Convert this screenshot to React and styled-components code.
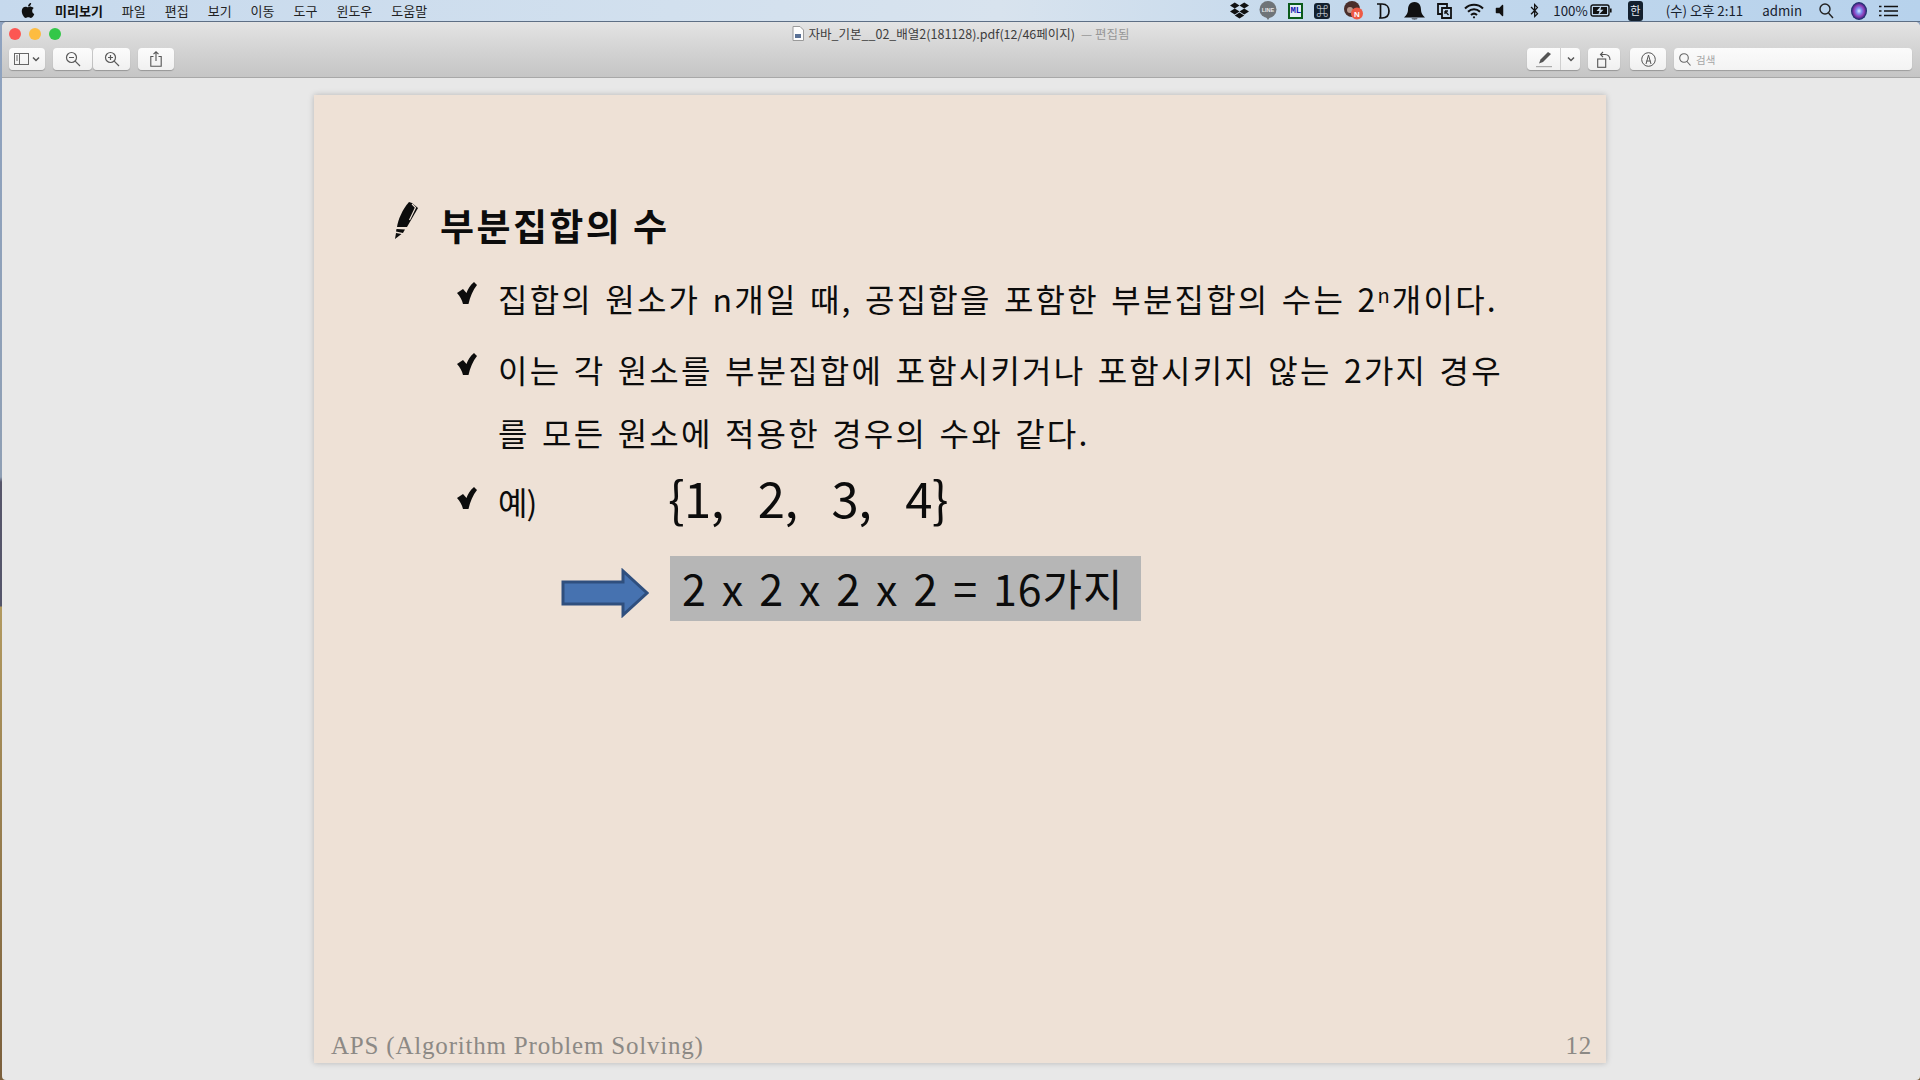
import React from 'react';
import styled, { createGlobalStyle } from 'styled-components';
import { FaApple, FaDropbox, FaBluetoothB, FaVolumeOff } from 'react-icons/fa';

const GlobalStyle = createGlobalStyle`
  html, body {
    margin: 0;
    padding: 0;
    width: 1920px;
    height: 1080px;
    overflow: hidden;
    background: #e8e8e8;
    font-family: "Noto Sans CJK KR", "Noto Sans", sans-serif;
  }
`;

const Screen = styled.div`
  width: 1920px;
  height: 1080px;
  display: flex;
  flex-direction: column;
`;

const MenuBar = styled.div`
  height: 22px;
  flex: none;
  display: flex;
  align-items: center;
  justify-content: space-between;
  padding: 0 22px 0 20px;
  background: linear-gradient(90deg, #c6d9ed 0%, #d2e0ee 35%, #d8e3ee 52%, #c3d8ec 70%, #b7d2ec 100%);
  border-bottom: 1px solid #5e6f85;
  box-sizing: border-box;
  color: #111;
`;

const MenuLeft = styled.div`
  display: flex;
  align-items: center;
  font-size: 13px;
  gap: 19px;
`;

const AppName = styled.span`
  font-weight: 700;
`;

const MenuItem = styled.span`
  color: #222;
`;

const AppleIcon = styled(FaApple)`
  width: 16px;
  height: 17px;
  color: #111;
`;

const MenuRight = styled.div`
  display: flex;
  align-items: center;
  font-size: 13.3px;
`;

const StatusItem = styled.span`
  display: flex;
  align-items: center;
  justify-content: center;
  margin-left: ${p => p.$gap || 0}px;
  color: #16202c;
  line-height: 1;
  white-space: nowrap;
`;

const TinyBadge = styled.span`
  width: 15px;
  height: 16px;
  box-sizing: border-box;
  border: 2px solid #0b5b1b;
  background: #e6eef8;
  color: #1818b0;
  font: 700 9px "Liberation Mono", monospace;
  display: flex;
  align-items: center;
  justify-content: center;
`;

const DarkBadge = styled.span`
  width: ${p => p.$w}px;
  height: ${p => p.$h}px;
  background: #13202e;
  color: #e8eef4;
  border-radius: 3px;
  font-size: ${p => p.$size}px;
  display: flex;
  align-items: center;
  justify-content: center;
`;

const Desktop = styled.div`
  flex: 1;
  display: flex;
  min-height: 0;
  background: linear-gradient(180deg, #8fa3c0 0px, #8f9fb4 455px, #57566a 460px, #54556a 584px, #b29a60 585px, #7a5f3c 100%);
`;

const Window = styled.div`
  flex: 1;
  margin-left: 1.5px;
  display: flex;
  flex-direction: column;
  background: #e8e8e8;
  border-radius: 5px 5px 4px 4px;
  overflow: hidden;
`;

const Toolbar = styled.div`
  height: 56px;
  flex: none;
  box-sizing: border-box;
  border-bottom: 1px solid #a8a8a8;
  background: linear-gradient(180deg, #e4e4e4 0%, #d5d5d5 45%, #c5c5c5 100%);
  padding: 0 8px 0 7.5px;
`;

const TitleRow = styled.div`
  height: 26px;
  box-sizing: border-box;
  padding-bottom: 4px;
  display: flex;
  align-items: center;
  justify-content: center;
  position: relative;
  font-size: 12.5px;
  color: #3d3d3d;
`;

const Lights = styled.div`
  position: absolute;
  left: 0;
  top: 6px;
  display: flex;
  gap: 8px;
`;

const Light = styled.span`
  width: 12px;
  height: 12px;
  border-radius: 50%;
  background: ${p => p.$color};
`;

const TitleEdited = styled.span`
  color: #979797;
  margin-left: 6px;
`;

const DocIcon = styled.svg`
  width: 12px;
  height: 15px;
  margin-right: 5px;
`;

const ButtonRow = styled.div`
  display: flex;
  align-items: center;
  height: 22px;
`;

const ToolButton = styled.div`
  width: ${p => p.$w}px;
  height: 22px;
  flex: none;
  margin-left: ${p => p.$gap || 0}px;
  box-sizing: border-box;
  background: linear-gradient(180deg, #fcfcfc, #f0f0f0);
  border-radius: 4px;
  box-shadow: 0 1px 1px rgba(0, 0, 0, 0.25);
  display: flex;
  align-items: center;
  justify-content: center;
  gap: 3px;
  color: #555;
`;

const SplitButton = styled.div`
  width: 53px;
  height: 22px;
  margin-left: auto;
  display: flex;
  background: linear-gradient(180deg, #fcfcfc, #f0f0f0);
  border-radius: 4px;
  box-shadow: 0 1px 1px rgba(0, 0, 0, 0.25);
`;

const SplitPart = styled.div`
  width: ${p => p.$w}px;
  display: flex;
  align-items: center;
  justify-content: center;
  border-right: ${p => (p.$divider ? '1px solid #cfcfcf' : 'none')};
`;

const SearchBox = styled.div`
  width: 238px;
  height: 22px;
  margin-left: 8px;
  box-sizing: border-box;
  background: linear-gradient(180deg, #fbfbfb, #f3f3f3);
  border-radius: 4px;
  box-shadow: 0 1px 1px rgba(0, 0, 0, 0.22);
  display: flex;
  align-items: center;
  padding-left: 5px;
  gap: 5px;
  font-size: 10.5px;
  color: #a5a5a5;
`;

const Canvas = styled.div`
  flex: 1;
  min-height: 0;
  display: flex;
  justify-content: center;
  padding: 17px 0 17px 0;
  margin-left: -1.5px;
`;

const Slide = styled.div`
  width: 1292px;
  height: 968px;
  box-sizing: border-box;
  background: #eee1d6;
  box-shadow: 0 0 6px rgba(0, 0, 0, 0.22);
  padding: 105px 14px 0 17px;
  display: flex;
  flex-direction: column;
  color: #0c0c0c;
`;

const Heading = styled.div`
  display: flex;
  align-items: center;
  height: 50px;
  padding-left: 64px;
  font-size: 37px;
  font-weight: 700;
  line-height: 50px;
  letter-spacing: 2.4px;
`;

const PenIcon = styled.svg`
  width: 26px;
  height: 38px;
  margin-right: 19px;
  margin-top: -10px;
  flex: none;
`;

const Bullet = styled.div`
  display: flex;
  align-items: flex-start;
  margin-top: ${p => p.$top}px;
  padding-left: 126px;
  font-size: 32px;
  line-height: 63px;
  height: ${p => p.$h || 63}px;
`;

const CheckIcon = styled.svg`
  width: 20px;
  height: 22px;
  margin-top: ${p => p.$top || 15}px;
  margin-right: 21px;
  flex: none;
`;

const BulletText = styled.div`
  width: 1020px;
  letter-spacing: 2.2px;
  word-spacing: 3px;
`;

const Sup = styled.sup`
  font-size: 20px;
  line-height: 0;
  vertical-align: 9px;
`;

const ExampleLabel = styled.span`
  width: 170px;
  flex: none;
  letter-spacing: -1px;
`;

const SetText = styled.span`
  font-size: 49px;
  line-height: 60px;
  margin-top: -3px;
  white-space: pre;
  letter-spacing: -0.5px;
  word-spacing: 6.5px;
`;

const ResultRow = styled.div`
  display: flex;
  align-items: center;
  margin-top: 23px;
  padding-left: 230px;
`;

const ArrowIcon = styled.svg`
  width: 88px;
  height: 50px;
  margin-right: 21px;
  margin-top: 9px;
  flex: none;
`;

const ResultBox = styled.div`
  width: 471px;
  height: 65px;
  box-sizing: border-box;
  background: #b6b6b6;
  padding-left: 12px;
  font-size: 43px;
  line-height: 63px;
  letter-spacing: 0.9px;
  word-spacing: 4.5px;
  white-space: pre;
`;

const Footer = styled.div`
  margin-top: auto;
  height: 31px;
  display: flex;
  justify-content: space-between;
  align-items: flex-start;
  font-family: "Liberation Serif", serif;
  font-size: 25px;
  color: #8c8985;
  letter-spacing: 0.8px;
`;

const stroke = { fill: 'none', stroke: '#5a5a5a', strokeWidth: 1.2 };

const Magnifier = ({ sign }) => (
  <svg width="16" height="16" viewBox="0 0 16 16" {...stroke}>
    <circle cx="6.5" cy="6.5" r="5" />
    <path d="M10.2 10.2 L15 15" />
    <path d="M4 6.5 H9" />
    {sign === 'plus' && <path d="M6.5 4 V9" />}
  </svg>
);

const Chevron = () => (
  <svg width="8" height="6" viewBox="0 0 8 6" fill="none" stroke="#555" strokeWidth="1.5">
    <path d="M1 1.5 L4 4.5 L7 1.5" />
  </svg>
);

const Check = ({ top }) => (
  <CheckIcon viewBox="0 0 20 22" $top={top}>
    <path d="M0 11 L6 7 L9.5 11 C11 7 13 3 17 0 L20 3 C16 8 13 15 11.5 22 L6 22 C5 18 3 14 0 11 Z" fill="#0c0c0c" />
  </CheckIcon>
);

function App() {
  return (
    <Screen>
      <GlobalStyle />
      <MenuBar>
        <MenuLeft>
          <AppleIcon />
          <AppName>미리보기</AppName>
          <MenuItem>파일</MenuItem>
          <MenuItem>편집</MenuItem>
          <MenuItem>보기</MenuItem>
          <MenuItem>이동</MenuItem>
          <MenuItem>도구</MenuItem>
          <MenuItem>윈도우</MenuItem>
          <MenuItem>도움말</MenuItem>
        </MenuLeft>
        <MenuRight>
          <StatusItem><FaDropbox size={19} color="#111" /></StatusItem>
          <StatusItem $gap={10}>
            <svg width="18" height="19" viewBox="0 0 18 19">
              <circle cx="9" cy="8.5" r="8.5" fill="#6f7478" />
              <path d="M7 16 L9 19 L11 16 Z" fill="#6f7478" />
              <text x="9" y="10.5" fontSize="5.5" fontWeight="700" fill="#e8e8e8" textAnchor="middle" fontFamily="Liberation Sans">LINE</text>
            </svg>
          </StatusItem>
          <StatusItem $gap={11}><TinyBadge>ML</TinyBadge></StatusItem>
          <StatusItem $gap={11}><DarkBadge $w={16} $h={16} $size={12}>⌘</DarkBadge></StatusItem>
          <StatusItem $gap={14}>
            <svg width="19" height="19" viewBox="0 0 19 19">
              <circle cx="8" cy="8" r="8" fill="#4a2e2a" />
              <circle cx="6" cy="9" r="3" fill="#b89a90" />
              <circle cx="13" cy="12.5" r="6" fill="#ee5a45" />
              <text x="13" y="15.5" fontSize="8" fontWeight="700" fill="#fff" textAnchor="middle" fontFamily="Liberation Sans">N</text>
            </svg>
          </StatusItem>
          <StatusItem $gap={14}>
            <svg width="13" height="16" viewBox="0 0 13 16" fill="none" stroke="#111" strokeWidth="1.7">
              <path d="M0 1 H5 C10 1 12 4.5 12 8 C12 12 10 15 5 15 H2 M3.5 1 V15" />
            </svg>
          </StatusItem>
          <StatusItem $gap={14}>
            <svg width="21" height="18" viewBox="0 0 21 18">
              <path d="M10.5 0 C15.5 0 17 4 17 8 C17 11 18.5 13 21 15.5 H0 C2.5 13 4 11 4 8 C4 4 5.5 0 10.5 0 Z" fill="#111" />
              <path d="M7.5 16.5 H13.5 C13 17.7 8 17.7 7.5 16.5 Z" fill="#111" />
            </svg>
          </StatusItem>
          <StatusItem $gap={12}>
            <svg width="15" height="16" viewBox="0 0 15 16" fill="none" stroke="#111" strokeWidth="1.8">
              <path d="M10 5 V1 H1 V11 H5" />
              <path d="M5 5 H14 V15 H5 Z" />
              <path d="M8 8 L11.5 12 M8 8 H11 M8 8 V11" strokeWidth="1.3" />
            </svg>
          </StatusItem>
          <StatusItem $gap={12}>
            <svg width="20" height="16" viewBox="0 0 20 16" fill="none" stroke="#111" strokeWidth="2">
              <path d="M1 5.5 C6 0.5 14 0.5 19 5.5" />
              <path d="M4 8.8 C7.5 5.3 12.5 5.3 16 8.8" />
              <path d="M7 12 C8.8 10.3 11.2 10.3 13 12" />
              <circle cx="10" cy="14.3" r="1.1" fill="#111" stroke="none" />
            </svg>
          </StatusItem>
          <StatusItem $gap={8}><FaVolumeOff size={15} color="#111" /></StatusItem>
          <StatusItem $gap={20}><FaBluetoothB size={15} color="#111" /></StatusItem>
          <StatusItem $gap={11}>100%</StatusItem>
          <StatusItem $gap={2}>
            <svg width="22" height="13" viewBox="0 0 22 13">
              <rect x="1" y="1" width="18" height="11" rx="2" fill="none" stroke="#111" strokeWidth="1.4" />
              <rect x="20" y="4.5" width="1.6" height="4" fill="#111" />
              <rect x="3" y="3" width="14" height="7" fill="#111" />
              <path d="M11.5 1.5 L6.5 7 H9.5 L8 11.5 L13.5 5.8 H10.5 Z" fill="#c3d8ec" />
            </svg>
          </StatusItem>
          <StatusItem $gap={16}><DarkBadge $w={15} $h={20} $size={11}>한</DarkBadge></StatusItem>
          <StatusItem $gap={23}>(수) 오후 2:11</StatusItem>
          <StatusItem $gap={19}>admin</StatusItem>
          <StatusItem $gap={17}>
            <svg width="15" height="16" viewBox="0 0 15 16" fill="none" stroke="#222" strokeWidth="1.4">
              <circle cx="6" cy="6" r="5" />
              <path d="M9.5 10 L14 15" />
            </svg>
          </StatusItem>
          <StatusItem $gap={17}>
            <svg width="16" height="18" viewBox="0 0 16 18">
              <defs>
                <radialGradient id="siri" cx="50%" cy="50%" r="55%">
                  <stop offset="0%" stopColor="#d4ecff" />
                  <stop offset="30%" stopColor="#7f8cf0" />
                  <stop offset="60%" stopColor="#8a38b0" />
                  <stop offset="85%" stopColor="#1c2a70" />
                  <stop offset="100%" stopColor="#0e1836" />
                </radialGradient>
              </defs>
              <ellipse cx="8" cy="9" rx="8" ry="9" fill="url(#siri)" />
            </svg>
          </StatusItem>
          <StatusItem $gap={12}>
            <svg width="19" height="12" viewBox="0 0 19 12" stroke="#111" strokeWidth="1.6">
              <path d="M5 1.5 H19 M5 6 H19 M5 10.5 H19" />
              <path d="M0 1.5 H2.5 M0 6 H2.5 M0 10.5 H2.5" />
            </svg>
          </StatusItem>
        </MenuRight>
      </MenuBar>

      <Desktop>
        <Window>
          <Toolbar>
            <TitleRow>
              <Lights>
                <Light $color="#fc5753" />
                <Light $color="#fdbc40" />
                <Light $color="#33c748" />
              </Lights>
              <DocIcon viewBox="0 0 12 15">
                <path d="M1 .5 H8 L11.5 4 V14.5 H1 Z" fill="#fdfdfd" stroke="#9a9a9a" />
                <rect x="3" y="8" width="6" height="4" fill="#5a7196" />
              </DocIcon>
              자바_기본__02_배열2(181128).pdf(12/46페이지)
              <TitleEdited>— 편집됨</TitleEdited>
            </TitleRow>
            <ButtonRow>
              <ToolButton $w={36}>
                <svg width="15" height="12" viewBox="0 0 15 12" fill="none" stroke="#666" strokeWidth="1">
                  <rect x=".5" y=".5" width="14" height="11" />
                  <path d="M5.5 .5 V11.5 M2 3 H4 M2 5 H4 M2 7 H4" />
                </svg>
                <Chevron />
              </ToolButton>
              <ToolButton $w={39} $gap={8}><Magnifier /></ToolButton>
              <ToolButton $w={37} $gap={1}><Magnifier sign="plus" /></ToolButton>
              <ToolButton $w={36} $gap={8}>
                <svg width="12" height="16" viewBox="0 0 12 16" fill="none" stroke="#555" strokeWidth="1.1">
                  <path d="M3.5 5.5 H.8 V15.3 H11.2 V5.5 H8.5" />
                  <path d="M6 10 V.8 M3.5 3.2 L6 .8 L8.5 3.2" />
                </svg>
              </ToolButton>
              <SplitButton>
                <SplitPart $w={34} $divider>
                  <svg width="18" height="17" viewBox="0 0 18 17">
                    <path d="M13 1 L16 3 L8 11 L4 12.5 L5.5 8.5 Z" fill="#555" />
                    <rect x="1" y="15" width="16" height="1.2" fill="#aaa" />
                  </svg>
                </SplitPart>
                <SplitPart $w={19}><Chevron /></SplitPart>
              </SplitButton>
              <ToolButton $w={32} $gap={8}>
                <svg width="14" height="17" viewBox="0 0 14 17" fill="none" stroke="#555" strokeWidth="1.1">
                  <rect x=".7" y="8" width="8" height="8.3" />
                  <path d="M4 3.5 H8 C11 3.5 13 5.5 13 9" />
                  <path d="M6 1 L3.5 3.5 L6 6" />
                </svg>
              </ToolButton>
              <ToolButton $w={36} $gap={10}>
                <svg width="15" height="15" viewBox="0 0 15 15" fill="none" stroke="#555" strokeWidth="1">
                  <circle cx="7.5" cy="7.5" r="6.8" />
                  <path d="M5 12 L7.5 3 L10 12 M5.5 9 H9.5" />
                </svg>
              </ToolButton>
              <SearchBox>
                <svg width="12" height="13" viewBox="0 0 12 13" fill="none" stroke="#666" strokeWidth="1.1">
                  <circle cx="5" cy="5" r="4.3" />
                  <path d="M8 8.5 L11.5 12.5" />
                </svg>
                검색
              </SearchBox>
            </ButtonRow>
          </Toolbar>

          <Canvas>
            <Slide>
              <Heading>
                <PenIcon viewBox="0 0 26 38">
                  <path d="M14 1 L17 2 L23 7 L12 26 L2 26 C3 19 7 9 14 1 Z" fill="#0c0c0c" />
                  <path d="M17 3 L20.5 6.5 L14.5 19" fill="none" stroke="#eee1d6" strokeWidth="1.2" />
                  <path d="M1.5 28 L10 28.5 L8.5 31 L8 32 L1 30.5 Z M1 32 L6.5 33 L0 38 Z" fill="#0c0c0c" />
                </PenIcon>
                부분집합의 수
              </Heading>
              <Bullet $top={17}>
                <Check />
                <BulletText>집합의 원소가 n개일 때, 공집합을 포함한 부분집합의 수는 2<Sup>n</Sup>개이다.</BulletText>
              </Bullet>
              <Bullet $top={8} $h={126}>
                <Check />
                <BulletText>이는 각 원소를 부분집합에 포함시키거나 포함시키지 않는 2가지 경우를 모든 원소에 적용한 경우의 수와 같다.</BulletText>
              </Bullet>
              <Bullet $top={6}>
                <Check top={17} />
                <ExampleLabel>예)</ExampleLabel>
                <SetText>{'{1,  2,  3,  4}'}</SetText>
              </Bullet>
              <ResultRow>
                <ArrowIcon viewBox="0 0 88 50">
                  <path d="M2 14 H62 V3 L86 25 L62 47 V36 H2 Z" fill="#4672b0" stroke="#2f4f7e" strokeWidth="3" />
                </ArrowIcon>
                <ResultBox>2 x 2 x 2 x 2 = 16가지</ResultBox>
              </ResultRow>
              <Footer>
                <span>APS (Algorithm Problem Solving)</span>
                <span>12</span>
              </Footer>
            </Slide>
          </Canvas>
        </Window>
      </Desktop>
    </Screen>
  );
}

export default App;
